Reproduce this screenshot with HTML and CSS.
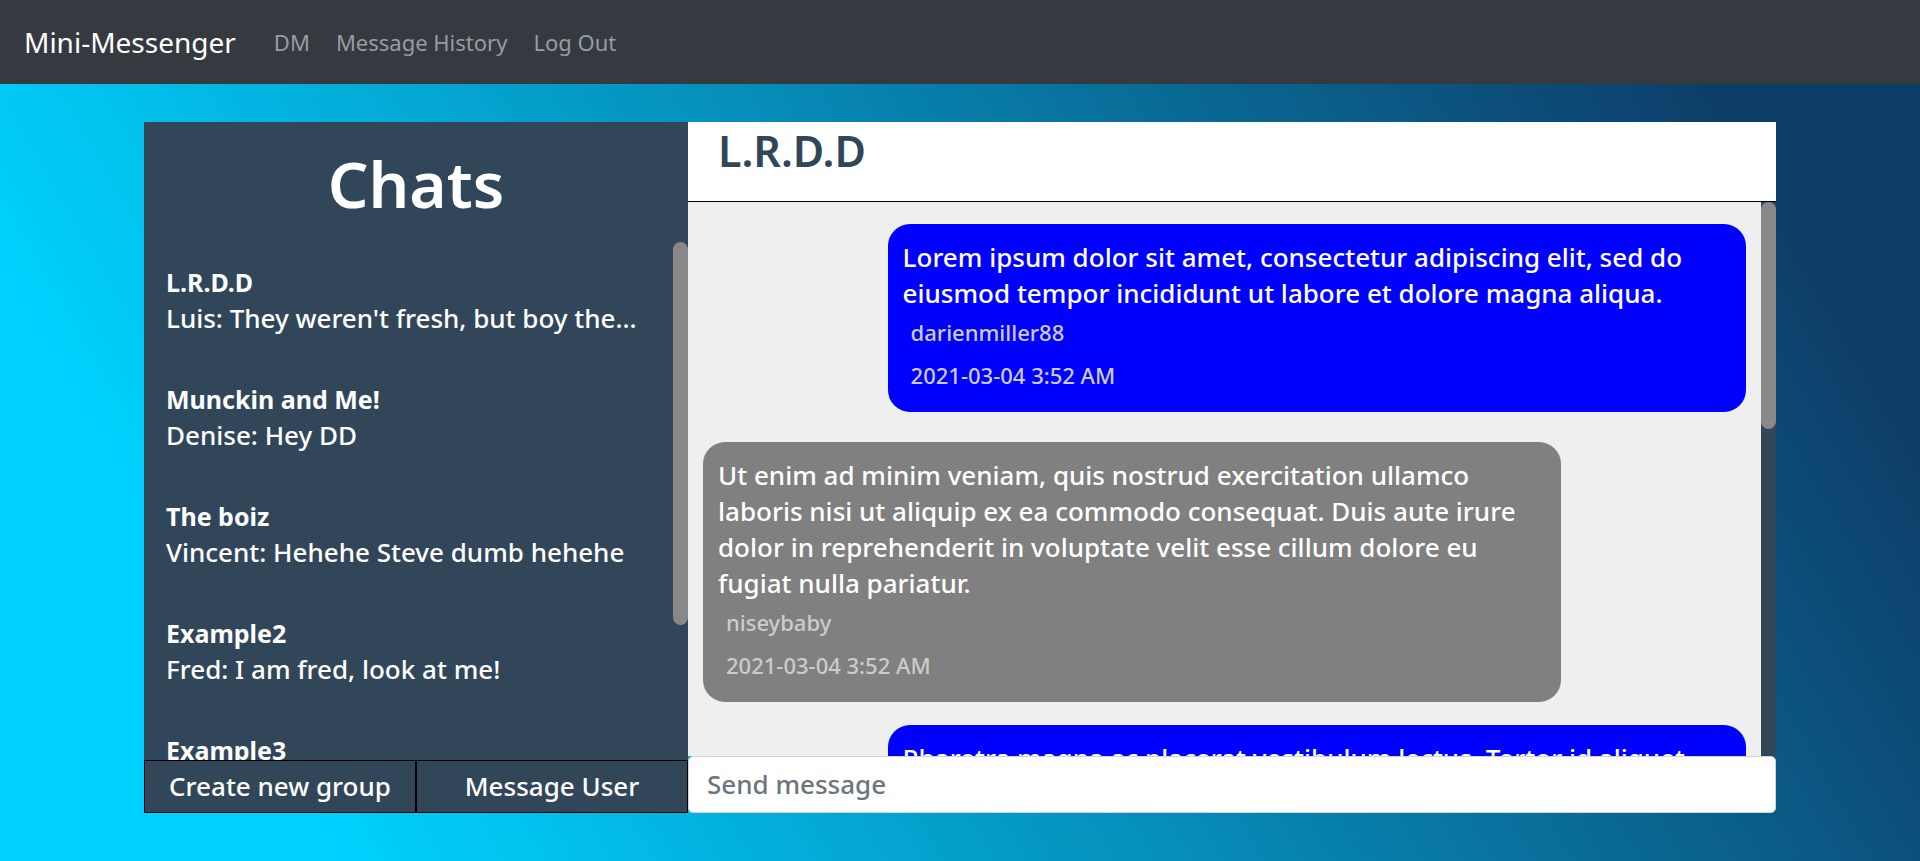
FILE: index.html
```
<!DOCTYPE html>
<html lang="en">
<head>
<meta charset="utf-8">
<title>Mini-Messenger</title>
<link rel="stylesheet" href="styles.css">
</head>
<body>
<nav class="navbar">
  <a class="brand" href="#">Mini-Messenger</a>
  <a class="nav-link" href="#">DM</a>
  <a class="nav-link" href="#">Message History</a>
  <a class="nav-link" href="#">Log Out</a>
</nav>
<main class="messenger">
  <section class="sidebar">
    <h1 class="sidebar-title">Chats</h1>
    <div class="scroll-area">
      <ul class="chat-list">
        <li class="chat"><h2 class="chat-name">L.R.D.D</h2><p class="chat-preview">Luis: They weren't fresh, but boy them tacos</p></li>
        <li class="chat"><h2 class="chat-name">Munckin and Me!</h2><p class="chat-preview">Denise: Hey DD</p></li>
        <li class="chat"><h2 class="chat-name">The boiz</h2><p class="chat-preview">Vincent: Hehehe Steve dumb hehehe</p></li>
        <li class="chat"><h2 class="chat-name">Example2</h2><p class="chat-preview">Fred: I am fred, look at me!</p></li>
        <li class="chat"><h2 class="chat-name">Example3</h2></li>
      </ul>
      <div class="scrollbar"><div class="thumb thumb-chats"></div></div>
    </div>
    <div class="actions">
      <button class="action" type="button">Create new group</button>
      <button class="action" type="button">Message User</button>
    </div>
  </section>
  <section class="conversation">
    <header class="conversation-header"><h2 class="conversation-title">L.R.D.D</h2></header>
    <div class="scroll-area">
      <div class="messages">
        <article class="message sent">
          <p class="message-text">Lorem ipsum dolor sit amet, consectetur adipiscing elit, sed do eiusmod tempor incididunt ut labore et dolore magna aliqua.</p>
          <p class="meta">darienmiller88</p>
          <p class="meta">2021-03-04 3:52 AM</p>
        </article>
        <article class="message received">
          <p class="message-text">Ut enim ad minim veniam, quis nostrud exercitation ullamco laboris nisi ut aliquip ex ea commodo consequat. Duis aute irure dolor in reprehenderit in voluptate velit esse cillum dolore eu fugiat nulla pariatur.</p>
          <p class="meta">niseybaby</p>
          <p class="meta">2021-03-04 3:52 AM</p>
        </article>
        <article class="message sent">
          <p class="message-text">Pharetra magna ac placerat vestibulum lectus. Tortor id aliquet</p>
        </article>
      </div>
      <div class="scrollbar"><div class="thumb thumb-messages"></div></div>
    </div>
    <input class="composer" type="text" placeholder="Send message" aria-label="Send message">
  </section>
</main>
</body>
</html>
```
FILE: styles.css
```
* {
  box-sizing: border-box;
}

body {
  margin: 0;
  min-height: 100vh;
  font-family: "Noto Sans", sans-serif;
  font-size: 26px;
  line-height: 36px;
  font-weight: 500;
  background: linear-gradient(60deg, #00d2ff 14%, #0d3e69 89%) no-repeat;
}

h1, h2, p, ul {
  margin: 0;
  padding: 0;
}

.navbar {
  display: flex;
  align-items: center;
  gap: 26px;
  padding: 21px 24px;
  background: #343a40;
  font-size: 22px;
  font-weight: 400;
  line-height: 42px;
}

.navbar a {
  text-decoration: none;
}

.brand {
  margin-right: 12px;
  color: #fff;
  font-size: 28px;
}

.nav-link {
  color: #999c9f;
}

.messenger {
  display: grid;
  grid-template-columns: 1fr 2fr;
  grid-template-rows: minmax(0, 1fr);
  width: 85%;
  height: calc(100vh - 170px);
  margin: 38px auto 0;
}

.sidebar,
.conversation {
  display: flex;
  flex-direction: column;
  min-width: 0;
}

.sidebar {
  background: #32465a;
  color: #fff;
}

.sidebar-title {
  padding: 22px 0 18px;
  font-size: 64px;
  font-weight: 600;
  line-height: 80px;
  text-align: center;
}

.scroll-area {
  display: flex;
  flex: 1;
  min-height: 0;
}

.scrollbar {
  flex: none;
  width: 15px;
  background: #32465a;
}

.thumb {
  border-radius: 8px;
  background: #888;
}

.thumb-chats {
  height: 74%;
}

.thumb-messages {
  height: 41%;
}

.chat-list {
  flex: 1;
  min-width: 0;
  overflow: hidden;
  list-style: none;
}

.chat {
  padding: 22px 22px 23px;
}

.chat-name {
  font-size: 25px;
  font-weight: 700;
}

.chat-preview {
  overflow: hidden;
  white-space: nowrap;
  text-overflow: ellipsis;
}

.actions {
  display: flex;
}

.action {
  flex: 1;
  padding: 7px 0 8px;
  border: 1px solid #000;
  background: #32465a;
  color: #fff;
  font: inherit;
}

.conversation-header {
  flex: none;
  height: 80px;
  padding: 0 30px;
  border-bottom: 1px solid #000;
  background: #fff;
}

.conversation-title {
  color: #32465a;
  font-size: 43px;
  font-weight: 600;
  line-height: 58px;
}

.messages {
  display: flex;
  flex: 1;
  flex-direction: column;
  gap: 30px;
  min-width: 0;
  padding: 22px 15px 0;
  overflow: hidden;
  background: #efefef;
}

.message {
  flex: none;
  width: calc(80% + 24px);
  padding: 15px 15px 20px;
  border-radius: 22px;
  color: #fff;
}

.sent {
  align-self: flex-end;
  background: #00f;
}

.received {
  align-self: flex-start;
  margin-bottom: -7px;
  background: #808080;
}

.meta {
  margin-top: 5px;
  padding: 0 8px 5px;
  color: #ccc;
  font-size: 22px;
  line-height: 33px;
}

.meta:last-child {
  padding-bottom: 0;
}

.composer {
  width: 100%;
  padding: 9px 18px 10px;
  border: 1px solid #ced4da;
  border-radius: 5px;
  background: #fff;
  color: #495057;
  font: inherit;
}

.composer::placeholder {
  color: #6c757d;
  opacity: 1;
}
```
